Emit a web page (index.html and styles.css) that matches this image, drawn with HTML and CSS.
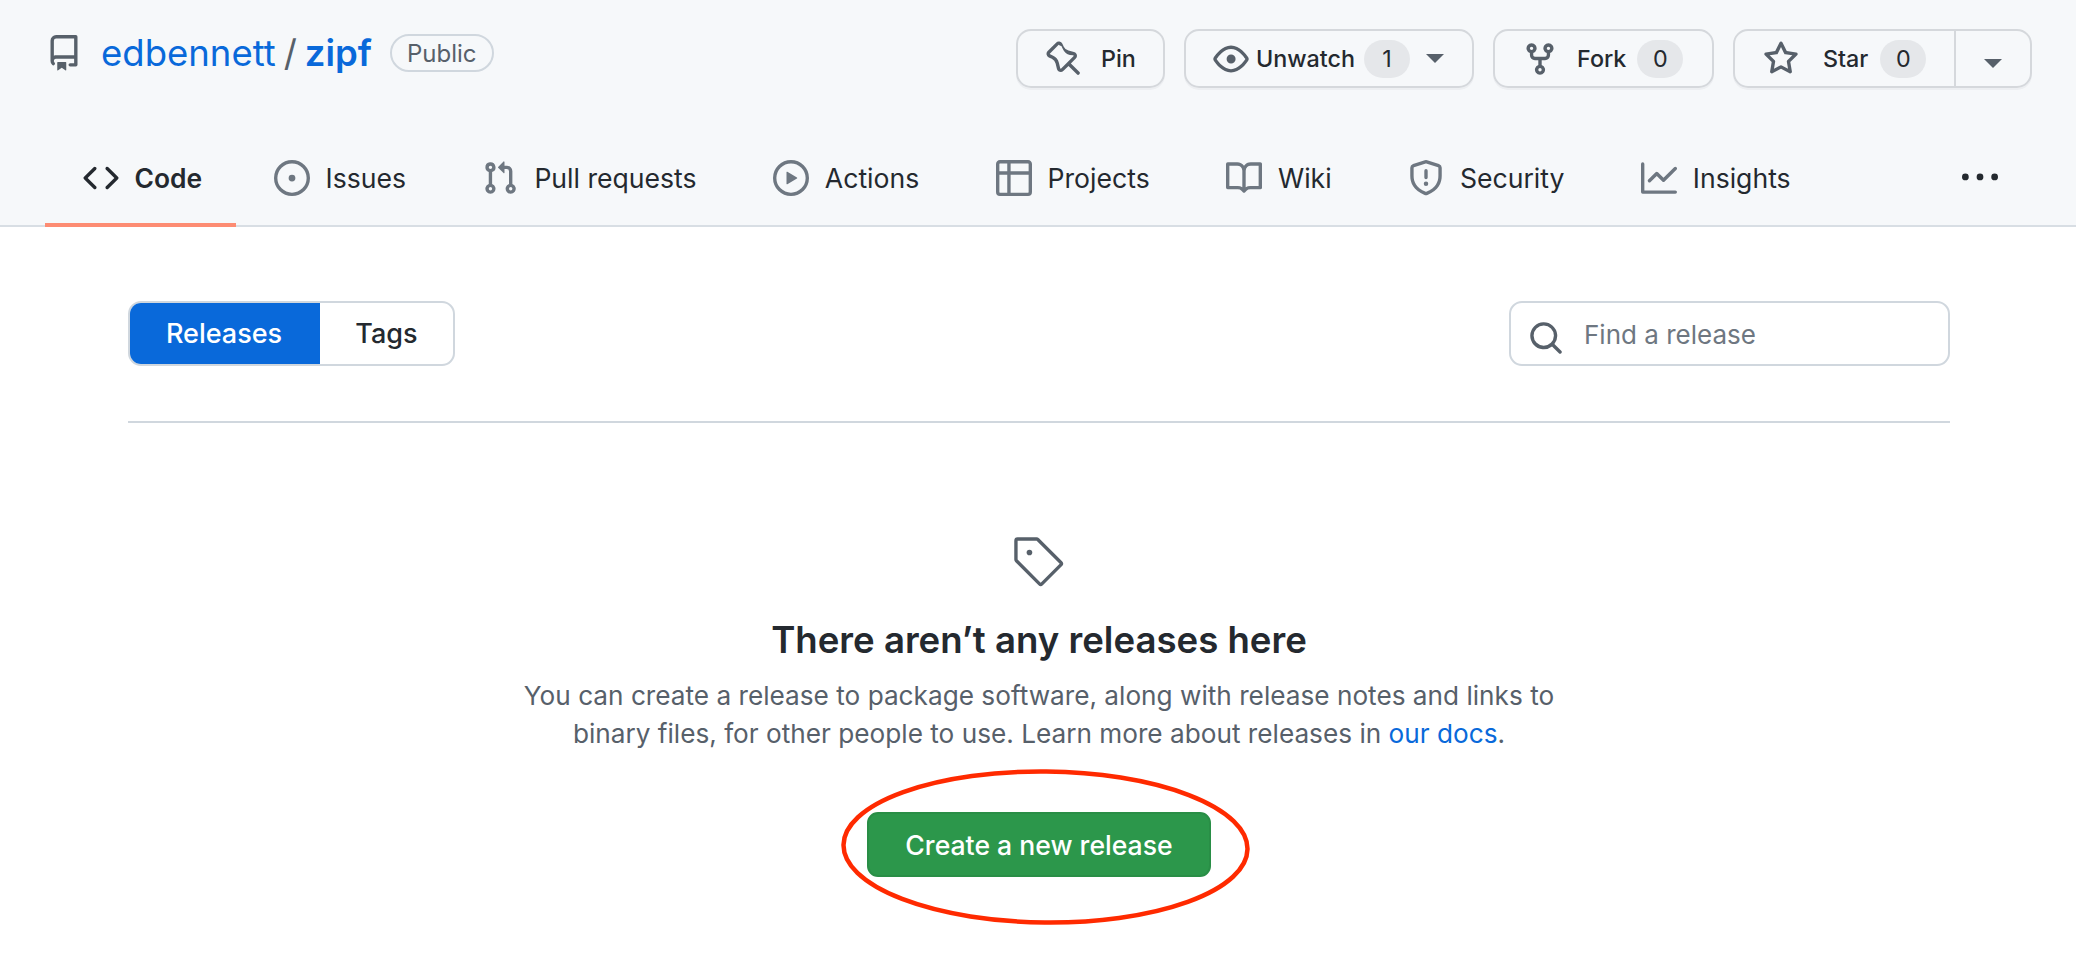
FILE: index.html
```html
<!DOCTYPE html>
<html lang="en">
<head>
  <meta charset="UTF-8">
  <meta name="viewport" content="width=device-width, initial-scale=1.0">
  <title>Releases - edbennett/zipf</title>
  <link rel="stylesheet" href="styles.css">
</head>
<body>
  <header class="repo-head">
    <div class="title-row">
      <div class="repo-title">
        <svg class="repo-icon" viewBox="0 0 16 16"><path fill-rule="evenodd" d="M2 2.5A2.5 2.5 0 014.5 0h8.75a.75.75 0 01.75.75v12.5a.75.75 0 01-.75.75h-2.5a.75.75 0 110-1.5h1.75v-2h-8a1 1 0 00-.714 1.7.75.75 0 01-1.072 1.05A2.495 2.495 0 012 11.5v-9zm10.5-1V9h-8c-.356 0-.694.074-1 .208V2.5a1 1 0 011-1h8zM5 12.25v3.25a.25.25 0 00.4.2l1.45-1.087a.25.25 0 01.3 0L8.6 15.7a.25.25 0 00.4-.2v-3.25a.25.25 0 00-.25-.25h-3.5a.25.25 0 00-.25.25z"/></svg>
        <a class="owner" href="#">edbennett</a>
        <span class="slash">/</span>
        <a class="repo-name" href="#">zipf</a>
        <span class="visibility">Public</span>
      </div>
      <div class="actions">
        <a class="btn btn-pin" href="#">
          <svg class="icon" viewBox="0 0 16 16"><path fill-rule="evenodd" d="M4.456.734a1.75 1.75 0 012.826.504l.613 1.327a3.081 3.081 0 002.084 1.707l2.454.584c1.332.317 1.8 1.972.832 2.94L11.06 10l3.72 3.72a.75.75 0 11-1.06 1.06L10 11.06l-2.204 2.205c-.968.968-2.623.5-2.94-.832l-.584-2.454a3.081 3.081 0 00-1.707-2.084l-1.327-.613a1.75 1.75 0 01-.504-2.826L4.456.734zM5.92 1.866a.25.25 0 00-.404-.072L1.794 5.516a.25.25 0 00.072.404l1.328.613A4.582 4.582 0 015.73 9.63l.584 2.454a.25.25 0 00.42.12l5.47-5.47a.25.25 0 00-.12-.42L10.63 6.23a4.581 4.581 0 01-3.098-2.537L6.92 2.366z"/></svg>
          Pin
        </a>
        <a class="btn btn-watch" href="#">
          <svg class="icon" viewBox="0 0 16 16"><path d="M1.679 7.932c.412-.621 1.242-1.75 2.366-2.717C5.175 4.242 6.527 3.5 8 3.5c1.473 0 2.824.742 3.955 1.715 1.124.967 1.954 2.096 2.366 2.717a.119.119 0 0 1 0 .136c-.412.621-1.242 1.75-2.366 2.717C10.825 11.758 9.473 12.5 8 12.5c-1.473 0-2.824-.742-3.955-1.715C2.92 9.818 2.09 8.69 1.679 8.068a.119.119 0 0 1 0-.136ZM8 2c-1.981 0-3.67.992-4.933 2.078C1.797 5.169.88 6.423.43 7.1a1.619 1.619 0 0 0 0 1.798c.45.678 1.367 1.932 2.637 3.024C4.329 13.008 6.019 14 8 14c1.981 0 3.67-.992 4.933-2.078 1.27-1.091 2.187-2.345 2.637-3.023a1.619 1.619 0 0 0 0-1.798c-.45-.678-1.367-1.932-2.637-3.023C11.671 2.992 9.981 2 8 2Zm0 8a2 2 0 1 0-.001-3.999A2 2 0 0 0 8 10Z"/></svg>
          <span class="btn-label">Unwatch</span>
          <span class="counter">1</span>
          <span class="caret"></span>
        </a>
        <a class="btn btn-fork" href="#">
          <svg class="icon" viewBox="0 0 16 16"><path d="M5 5.372v.878c0 .414.336.75.75.75h4.5a.75.75 0 0 0 .75-.75v-.878a2.25 2.25 0 1 1 1.5 0v.878a2.25 2.25 0 0 1-2.25 2.25h-1.5v2.128a2.251 2.251 0 1 1-1.5 0V8.5h-1.5A2.25 2.25 0 0 1 3.5 6.25v-.878a2.25 2.25 0 1 1 1.5 0ZM5 3.25a.75.75 0 1 0-1.5 0 .75.75 0 0 0 1.5 0Zm6.75.75a.75.75 0 1 0 0-1.5.75.75 0 0 0 0 1.5Zm-3 8.75a.75.75 0 1 0-1.5 0 .75.75 0 0 0 1.5 0Z"/></svg>
          <span class="btn-label">Fork</span>
          <span class="counter">0</span>
        </a>
        <div class="btn btn-star">
          <a class="star-main" href="#">
            <svg class="icon" viewBox="0 0 16 16"><path d="M8 .25a.75.75 0 0 1 .673.418l1.882 3.815 4.21.612a.75.75 0 0 1 .416 1.279l-3.046 2.97.719 4.192a.751.751 0 0 1-1.088.791L8 12.347l-3.766 1.98a.75.75 0 0 1-1.088-.79l.72-4.194L.818 6.374a.75.75 0 0 1 .416-1.28l4.21-.611L7.327.668A.75.75 0 0 1 8 .25Zm0 2.445L6.615 5.5a.75.75 0 0 1-.564.41l-3.097.45 2.24 2.184a.75.75 0 0 1 .216.664l-.528 3.084 2.769-1.456a.75.75 0 0 1 .698 0l2.77 1.456-.53-3.084a.75.75 0 0 1 .216-.664l2.24-2.183-3.096-.45a.75.75 0 0 1-.564-.41L8 2.694Z"/></svg>
            <span class="btn-label">Star</span>
            <span class="counter">0</span>
          </a>
          <a class="star-more" href="#"><span class="caret caret-star"></span></a>
        </div>
      </div>
    </div>

    <nav class="tabs">
      <a class="tab tab-active" href="#">
        <svg class="icon" viewBox="0 0 16 16"><path d="m11.28 3.22 4.25 4.25a.75.75 0 0 1 0 1.06l-4.25 4.25a.749.749 0 0 1-1.275-.326.749.749 0 0 1 .215-.734L13.94 8l-3.72-3.72a.749.749 0 0 1 .326-1.275.749.749 0 0 1 .734.215Zm-6.56 0a.751.751 0 0 1 1.042.018.751.751 0 0 1 .018 1.042L2.06 8l3.72 3.72a.749.749 0 0 1-.326 1.275.749.749 0 0 1-.734-.215L.47 8.53a.75.75 0 0 1 0-1.06Z"/></svg>
        Code
      </a>
      <a class="tab" href="#">
        <svg class="icon" viewBox="0 0 16 16"><path d="M8 9.5a1.5 1.5 0 1 0 0-3 1.5 1.5 0 0 0 0 3Z"/><path d="M8 0a8 8 0 1 1 0 16A8 8 0 0 1 8 0ZM1.5 8a6.5 6.5 0 1 0 13 0 6.5 6.5 0 0 0-13 0Z"/></svg>
        Issues
      </a>
      <a class="tab" href="#">
        <svg class="icon" viewBox="0 0 16 16"><path d="M1.5 3.25a2.25 2.25 0 1 1 3 2.122v5.256a2.251 2.251 0 1 1-1.5 0V5.372A2.25 2.25 0 0 1 1.5 3.25Zm5.677-.177L9.573.677A.25.25 0 0 1 10 .854V2.5h1A2.5 2.5 0 0 1 13.5 5v5.628a2.251 2.251 0 1 1-1.5 0V5a1 1 0 0 0-1-1h-1v1.646a.25.25 0 0 1-.427.177L7.177 3.427a.25.25 0 0 1 0-.354ZM3.75 2.5a.75.75 0 1 0 0 1.5.75.75 0 0 0 0-1.5Zm0 9.5a.75.75 0 1 0 0 1.5.75.75 0 0 0 0-1.5Zm8.25.75a.75.75 0 1 0 1.5 0 .75.75 0 0 0-1.5 0Z"/></svg>
        Pull requests
      </a>
      <a class="tab" href="#">
        <svg class="icon" viewBox="0 0 16 16"><path d="M8 0a8 8 0 1 1 0 16A8 8 0 0 1 8 0ZM1.5 8a6.5 6.5 0 1 0 13 0 6.5 6.5 0 0 0-13 0Zm4.879-2.773 4.264 2.559a.25.25 0 0 1 0 .428l-4.264 2.559A.25.25 0 0 1 6 10.559V5.442a.25.25 0 0 1 .379-.215Z"/></svg>
        Actions
      </a>
      <a class="tab" href="#">
        <svg class="icon" viewBox="0 0 16 16"><path d="M0 1.75C0 .784.784 0 1.75 0h12.5C15.216 0 16 .784 16 1.75v12.5A1.75 1.75 0 0 1 14.25 16H1.75A1.75 1.75 0 0 1 0 14.25ZM6.5 6.5v8h7.75a.25.25 0 0 0 .25-.25V6.5Zm8-1.5V1.75a.25.25 0 0 0-.25-.25H6.5V5Zm-13 1.5v7.75c0 .138.112.25.25.25H5v-8ZM5 5V1.5H1.75a.25.25 0 0 0-.25.25V5Z"/></svg>
        Projects
      </a>
      <a class="tab" href="#">
        <svg class="icon" viewBox="0 0 16 16"><path d="M0 1.75A.75.75 0 0 1 .75 1h4.253c1.227 0 2.317.59 3 1.501A3.743 3.743 0 0 1 11.006 1h4.245a.75.75 0 0 1 .75.75v10.5a.75.75 0 0 1-.75.75h-4.507a2.25 2.25 0 0 0-1.591.659l-.622.621a.75.75 0 0 1-1.06 0l-.622-.621A2.25 2.25 0 0 0 5.258 13H.75a.75.75 0 0 1-.75-.75Zm7.251 10.324.004-5.073-.002-2.253A2.25 2.25 0 0 0 5.003 2.5H1.5v9h3.757a3.75 3.75 0 0 1 1.994.574ZM8.755 4.75l-.004 7.322a3.752 3.752 0 0 1 1.992-.572H14.5v-9h-3.495a2.25 2.25 0 0 0-2.25 2.25Z"/></svg>
        Wiki
      </a>
      <a class="tab" href="#">
        <svg class="icon" viewBox="0 0 16 16"><path d="M7.467.133a1.748 1.748 0 0 1 1.066 0l5.25 1.68A1.75 1.75 0 0 1 15 3.48V7c0 1.566-.32 3.182-1.303 4.682-.983 1.498-2.585 2.813-5.032 3.855a1.697 1.697 0 0 1-1.33 0c-2.447-1.042-4.049-2.357-5.032-3.855C1.32 10.182 1 8.566 1 7V3.48a1.75 1.75 0 0 1 1.217-1.667Zm.61 1.429a.25.25 0 0 0-.153 0l-5.25 1.68a.25.25 0 0 0-.174.238V7c0 1.358.275 2.666 1.057 3.86.784 1.194 2.121 2.34 4.366 3.297a.196.196 0 0 0 .154 0c2.245-.956 3.582-2.104 4.366-3.298C13.225 9.666 13.5 8.36 13.5 7V3.48a.251.251 0 0 0-.174-.237l-5.25-1.68ZM8.75 4.75v3a.75.75 0 0 1-1.5 0v-3a.75.75 0 0 1 1.5 0ZM9 10.5a1 1 0 1 1-2 0 1 1 0 0 1 2 0Z"/></svg>
        Security
      </a>
      <a class="tab" href="#">
        <svg class="icon" viewBox="0 0 16 16"><path d="M1.5 1.75V13.5h13.75a.75.75 0 0 1 0 1.5H.75a.75.75 0 0 1-.75-.75V1.75a.75.75 0 0 1 1.5 0Zm14.28 2.53-5.25 5.25a.75.75 0 0 1-1.06 0L7 7.06 4.28 9.78a.751.751 0 0 1-1.042-.018.751.751 0 0 1-.018-1.042l3.25-3.25a.75.75 0 0 1 1.06 0L10 7.94l4.72-4.72a.751.751 0 0 1 1.042.018.751.751 0 0 1 .018 1.042Z"/></svg>
        Insights
      </a>
      <a class="tab-more" href="#">
        <svg class="icon" viewBox="0 0 16 16"><path d="M8 9a1.5 1.5 0 1 0 0-3 1.5 1.5 0 0 0 0 3ZM1.5 9a1.5 1.5 0 1 0 0-3 1.5 1.5 0 0 0 0 3Zm13 0a1.5 1.5 0 1 0 0-3 1.5 1.5 0 0 0 0 3Z"/></svg>
      </a>
    </nav>
  </header>

  <main class="content">
    <div class="filter-row">
      <div class="segmented">
        <a class="seg seg-active" href="#">Releases</a>
        <a class="seg" href="#">Tags</a>
      </div>
      <label class="search">
        <svg class="icon" viewBox="0 0 16 16"><path d="M10.68 11.74a6 6 0 0 1-7.922-8.982 6 6 0 0 1 8.982 7.922l3.04 3.04a.749.749 0 0 1-.326 1.275.749.749 0 0 1-.734-.215ZM11.5 7a4.499 4.499 0 1 0-8.997 0A4.499 4.499 0 0 0 11.5 7Z"/></svg>
        <span class="search-text">Find a release</span>
      </label>
    </div>

    <section class="blankslate">
      <svg class="tag-icon" viewBox="0 0 24 24"><path d="M7.75 6.5a1.25 1.25 0 1 0 0 2.5 1.25 1.25 0 0 0 0-2.5Z"/><path d="M2.5 1h8.44a1.5 1.5 0 0 1 1.06.44l10.25 10.25a1.5 1.5 0 0 1 0 2.12l-8.44 8.44a1.5 1.5 0 0 1-2.12 0L1.44 12A1.5 1.5 0 0 1 1 10.94V2.5A1.5 1.5 0 0 1 2.5 1Zm0 1.5v8.44l10.25 10.25 8.44-8.44L10.94 2.5Z"/></svg>
      <h2>There aren’t any releases here</h2>
      <p>You can create a release to package software, along with release notes and links to<br>binary files, for other people to use. Learn more about releases in <a href="#">our docs</a>.</p>
      <a class="btn-primary" href="#">Create a new release</a>
    </section>
  </main>

  <svg class="annotation" viewBox="0 0 409 156"><ellipse cx="204.5" cy="78" rx="202" ry="75.5" transform="rotate(0.6 204.5 78)"/></svg>
</body>
</html>
```

FILE: styles.css
```css
*{
  box-sizing: border-box;
}
body{
  margin: 0;
  font-family: "Inter", "Liberation Sans", sans-serif;
  font-size: 28px;
  color: #24292f;
  background: #fff;
  overflow: hidden;
}
a{
  color: inherit;
  text-decoration: none;
}
svg{
  fill: currentColor;
  flex: none;
}
.icon{
  width: 36px;
  height: 36px;
}

/* repo header */
.repo-head{
  height: 227px;
  background: #f6f8fa;
  border-bottom: 2px solid #d8dee4;
}
.title-row{
  display: flex;
  justify-content: space-between;
  padding: 29px 44px 0 46px;
  height: 120px;
}
.repo-title{
  display: flex;
  align-items: center;
  height: 48px;
  font-size: 36.5px;
}
.repo-icon{
  width: 36px;
  height: 36px;
  color: #57606a;
  margin-right: 19px;
}
.owner, .repo-name{
  color: #0969da;
}
.repo-name{
  font-weight: 600;
}
.slash{
  color: #57606a;
  margin: 0 8px;
}
.visibility{
  margin-left: 18px;
  height: 38px;
  padding: 0 15px;
  display: flex;
  align-items: center;
  border: 2px solid #d0d7de;
  border-radius: 19px;
  font-size: 24px;
  color: #57606a;
}

.actions{
  display: flex;
  gap: 19px;
}
.btn{
  display: flex;
  align-items: center;
  height: 59px;
  border: 2px solid #d5d8dc;
  border-radius: 15px;
  box-shadow: 0 2px 0 rgba(31, 35, 40, 0.04);
  font-size: 23.3px;
  font-weight: 500;
  white-space: nowrap;
}
.btn .icon{
  color: #57606a;
}
.btn-pin{
  width: 149px;
  padding-left: 28px;
  gap: 19px;
}
.btn-watch{
  width: 290px;
  padding-left: 27px;
}
.btn-watch .btn-label{
  margin-left: 7px;
}
.btn-watch .counter{
  margin-left: 9px;
}
.btn-watch .caret{
  margin-left: 16px;
}
.btn-fork{
  width: 221px;
  padding-left: 27px;
}
.btn-fork .btn-label{
  margin-left: 19px;
}
.btn-fork .counter{
  margin-left: 11px;
}
.btn-star{
  width: 299px;
}
.star-main{
  display: flex;
  align-items: center;
  width: 221px;
  height: 100%;
  padding-left: 28px;
  border-right: 2px solid #d5d8dc;
}
.star-main .btn-label{
  margin-left: 24px;
}
.star-main .counter{
  margin-left: 12px;
}
.star-more{
  flex: 1;
  display: flex;
  justify-content: center;
  align-items: center;
}
.counter{
  width: 46px;
  height: 38px;
  display: flex;
  align-items: center;
  justify-content: center;
  border-radius: 19px;
  background: #e5e7ea;
  font-weight: 400;
}
.caret{
  width: 0;
  height: 0;
  border-left: 9px solid transparent;
  border-right: 9px solid transparent;
  border-top: 9px solid #57606a;
}
.caret-star{
  margin-top: 9px;
}

/* tabs */
.tabs{
  display: flex;
  align-items: stretch;
  padding-left: 45px;
  height: 107px;
}
.tab{
  display: flex;
  align-items: center;
  gap: 16px;
  padding: 12px 38.8px 0 37.5px;
  border-bottom: 4px solid transparent;
  font-size: 26.6px;
}
.tab .icon, .tab-more .icon{
  color: #6e7781;
}
.tab-active{
  padding-right: 34px;
  font-size: 26.4px;
  font-weight: 600;
  border-bottom-color: #fd8c73;
}
.tab-active .icon{
  color: #24292f;
}
.tab-more{
  margin-left: auto;
  margin-right: 78px;
  display: flex;
  align-items: center;
  padding-top: 8px;
}
.tab-more .icon{
  color: #24292f;
}

/* page body */
.content{
  margin: 0 126px 0 128px;
  padding-top: 74px;
}
.filter-row{
  display: flex;
  justify-content: space-between;
  padding-bottom: 55px;
  border-bottom: 2px solid #d0d7de;
}
.segmented{
  display: flex;
  width: 327px;
  height: 65px;
  border: 2px solid #d0d7de;
  border-radius: 13px;
  overflow: hidden;
  font-weight: 500;
  font-size: 27px;
}
.seg{
  flex: 1;
  display: flex;
  align-items: center;
  justify-content: center;
}
.seg-active{
  flex: none;
  width: 192px;
  margin: -2px 0 -2px -2px;
  background: #0969da;
  color: #fff;
}
.search{
  display: flex;
  align-items: center;
  width: 441px;
  height: 65px;
  padding: 2px 0 0 17px;
  gap: 20px;
  border: 2px solid #d0d7de;
  border-radius: 13px;
  color: #57606a;
  font-size: 26px;
}
.search .icon{
  margin-top: 6px;
}
.search-text{
  color: #6e7781;
}

.blankslate{
  display: flex;
  flex-direction: column;
  align-items: center;
  padding-top: 112px;
  text-align: center;
}
.tag-icon{
  width: 54px;
  height: 54px;
  color: #57606a;
}
h2{
  margin: 25px 0 0;
  font-size: 36.6px;
  line-height: 52px;
  font-weight: 600;
}
p{
  margin: 11px 0 0;
  font-size: 26.2px;
  line-height: 38px;
  color: #57606a;
}
p a{
  color: #0969da;
}
.btn-primary{
  margin-top: 59px;
  width: 344px;
  height: 65px;
  display: flex;
  align-items: center;
  justify-content: center;
  background: #2c974b;
  border: 2px solid #298e46;
  border-radius: 11px;
  color: #fff;
  font-size: 26.6px;
  font-weight: 500;
}

/* red marker drawn over the button */
.annotation{
  position: absolute;
  left: 841px;
  top: 769px;
  width: 409px;
  height: 156px;
  fill: none;
  stroke: #ff2a00;
  stroke-width: 4.5;
}
```
